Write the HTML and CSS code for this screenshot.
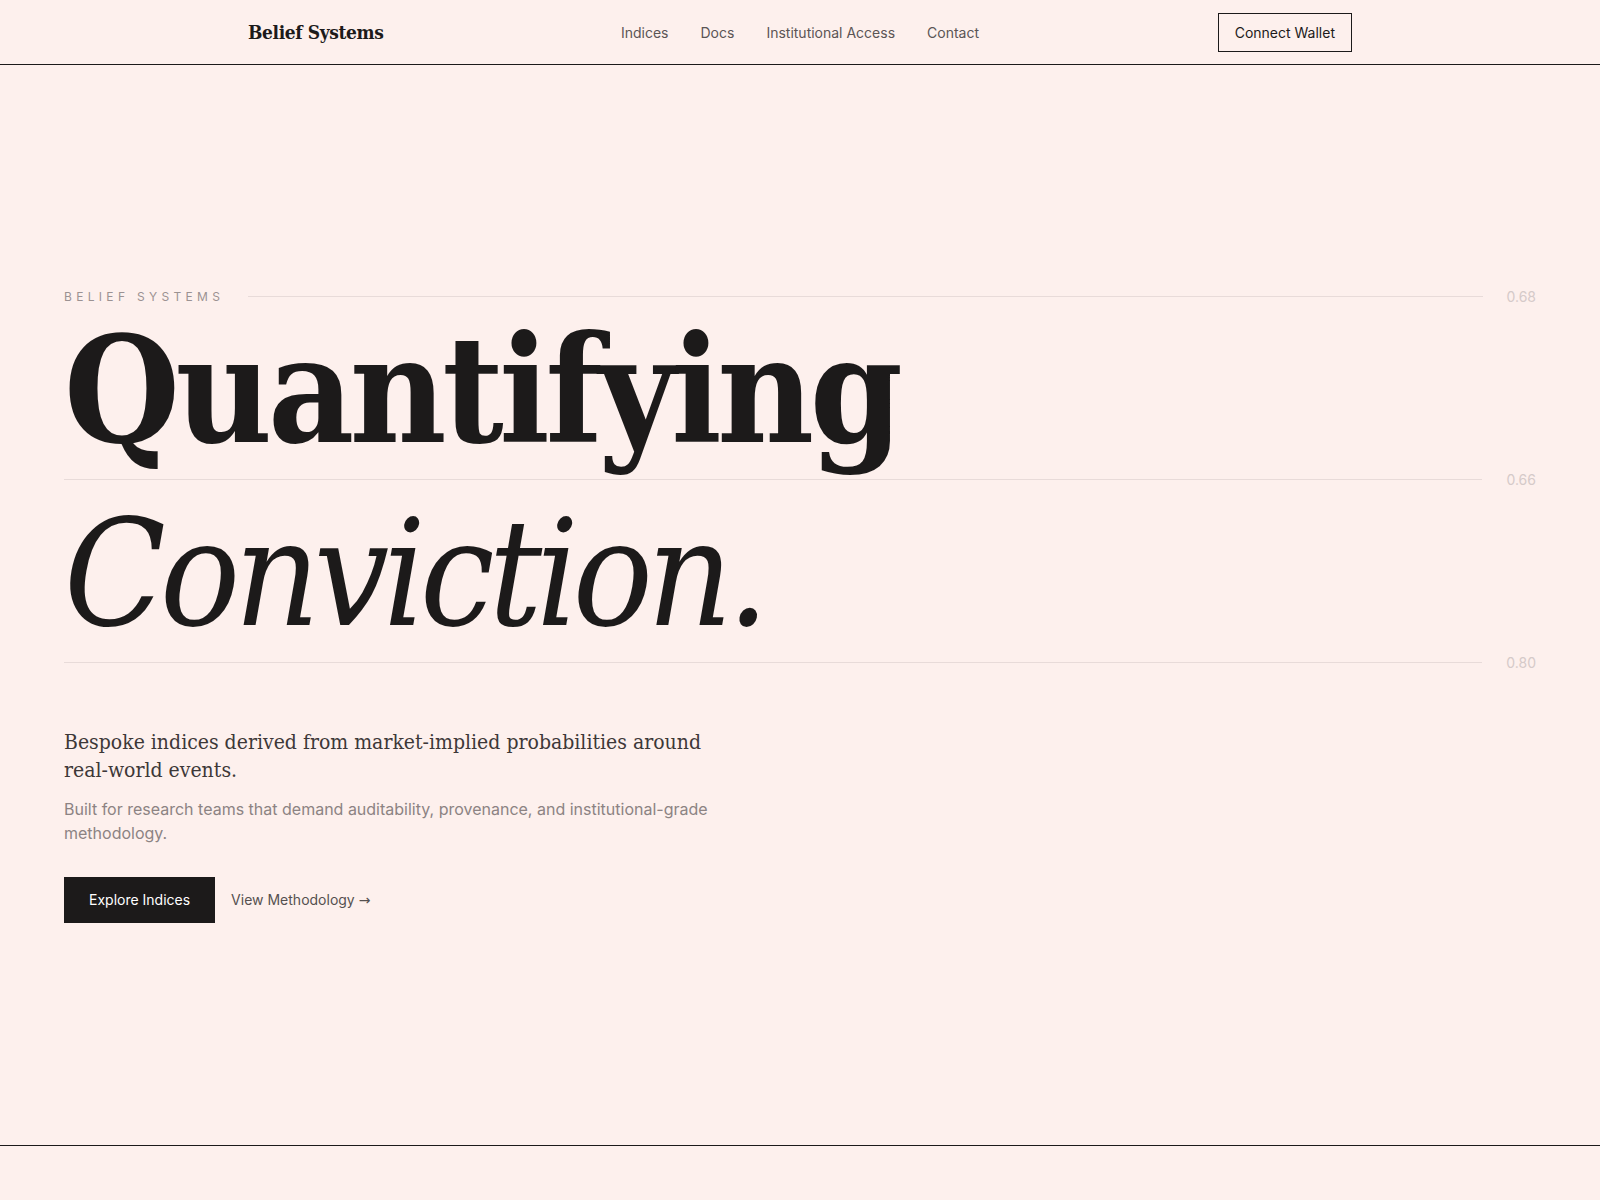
FILE: index.html
```html
<!DOCTYPE html>
<html lang="en">
<head>
  <meta charset="UTF-8">
  <meta name="viewport" content="width=device-width, initial-scale=1.0">
  <title>Belief Systems</title>
  <link rel="stylesheet" href="styles.css">
</head>
<body>
  <header class="site-header">
    <div class="header-inner">
      <a class="logo" href="#">Belief Systems</a>
      <nav class="main-nav">
        <a href="#">Indices</a>
        <a href="#">Docs</a>
        <a href="#">Institutional Access</a>
        <a href="#">Contact</a>
      </nav>
      <button class="wallet-btn">Connect Wallet</button>
    </div>
  </header>

  <section class="hero">
    <div class="hero-inner">
      <div class="scale-row eyebrow-row">
        <span class="eyebrow">Belief Systems</span>
        <span class="rule"></span>
        <span class="tick">0.68</span>
      </div>

      <h1 class="headline">
        <span class="headline-line strong">Quantifying</span>
        <span class="scale-row"><span class="rule"></span><span class="tick">0.66</span></span>
        <span class="headline-line soft">Conviction.</span>
        <span class="scale-row"><span class="rule"></span><span class="tick">0.80</span></span>
      </h1>

      <div class="hero-copy">
        <p class="lead">Bespoke indices derived from market-implied probabilities around real-world events.</p>
        <p class="sub">Built for research teams that demand auditability, provenance, and institutional-grade methodology.</p>
        <div class="actions">
          <a class="btn-primary" href="#">Explore Indices</a>
          <a class="btn-link" href="#">View Methodology <span class="arrow">&rarr;</span></a>
        </div>
      </div>
    </div>
  </section>

  <section class="below"></section>
</body>
</html>
```

FILE: styles.css
```css
body {
  margin: 0;
  font-family: Inter, "Liberation Sans", sans-serif;
  background: #fdf0ed;
  color: #1c1a1a;
}

a {
  color: inherit;
  text-decoration: none;
}

/* header */

.site-header {
  border-bottom: 1px solid #1c1a1a;
}

.header-inner {
  max-width: 1104px;
  margin: 0 auto;
  height: 64px;
  display: grid;
  grid-template-columns: 1fr auto 1fr;
  align-items: center;
}

.logo {
  font-family: "DejaVu Serif Condensed", "DejaVu Serif", serif;
  font-weight: 700;
  font-size: 19px;
  letter-spacing: -0.02em;
  color: #1c1a1a;
}

.main-nav {
  display: flex;
  gap: 32px;
  font-size: 14px;
  color: #5b5555;
}

.wallet-btn {
  justify-self: end;
  font-family: inherit;
  font-size: 14px;
  line-height: 17px;
  color: #1c1a1a;
  background: transparent;
  border: 1px solid #1c1a1a;
  padding: 10px 16px;
  cursor: pointer;
}

/* hero */

.hero {
  min-height: 90vh;
  display: flex;
  align-items: center;
  border-bottom: 1px solid #1c1a1a;
}

.hero-inner {
  width: 100%;
  padding: 0 64px;
  box-sizing: border-box;
}

/* horizontal probability guides with their value at the right end */
.scale-row {
  display: flex;
  align-items: center;
  gap: 24px;
  height: 18px;
}

.rule {
  flex: 1;
  height: 1px;
  background: #e8dbd9;
}

.tick {
  font-family: Inter, "Liberation Sans", sans-serif;
  font-size: 14px;
  font-weight: 400;
  font-style: normal;
  letter-spacing: 0;
  color: #d5cac9;
}

.eyebrow {
  font-size: 12px;
  letter-spacing: 0.36em;
  text-transform: uppercase;
  color: #9b9292;
}

.headline {
  margin: 0;
  font-family: "DejaVu Serif Condensed", "DejaVu Serif", serif;
  font-size: 148px;
  letter-spacing: -0.03em;
  color: #1c1a1a;
}

.headline-line {
  display: block;
  line-height: 1;
}

.headline-line.strong {
  font-weight: 700;
  margin-top: 10px;
  height: 155px;
}

.headline-line.soft {
  font-weight: 400;
  font-style: italic;
  letter-spacing: -0.04em;
  padding-top: 11px;
  height: 154px;
}

.hero-copy {
  max-width: 680px;
  margin-top: 56px;
}

.lead {
  margin: 0;
  font-family: "DejaVu Serif Condensed", "DejaVu Serif", serif;
  font-size: 21px;
  line-height: 28px;
  color: #3d3838;
}

.sub {
  margin: 13px 0 0;
  font-size: 16px;
  line-height: 24px;
  color: #8c8383;
}

.actions {
  display: flex;
  align-items: center;
  gap: 16px;
  margin-top: 32px;
}

.btn-primary {
  background: #1c1a1a;
  color: #fff;
  font-size: 14px;
  line-height: 46px;
  padding: 0 25px;
}

.btn-link {
  font-size: 14px;
  color: #555050;
}

.arrow {
  font-family: "DejaVu Sans", sans-serif;
}

.below {
  height: 200px;
}
```
